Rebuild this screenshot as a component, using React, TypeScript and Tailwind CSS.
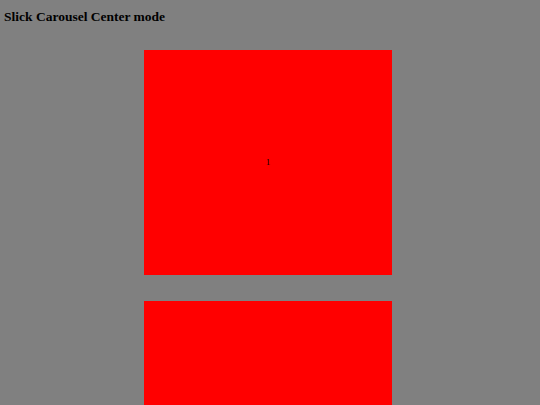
import React from 'react';

const slides = [1, 2];

function App() {
  return (
    <div className="min-h-[405px] bg-[#808080] overflow-hidden" style={{ fontFamily: '"Liberation Serif", serif' }}>
      <h3 className="pl-1 pt-[9px] text-[13.5px] font-bold leading-[15px] text-black">Slick Carousel Center mode</h3>
      <div className="flex flex-col items-center gap-[26px] pt-[26px] pr-[4px]">
        {slides.map((n) => (
          <div key={n} className="flex h-[225px] w-[248px] items-center justify-center bg-[#ff0000]">
            <span className="text-[9px] leading-none text-black">{n}</span>
          </div>
        ))}
      </div>
    </div>
  );
}

export default App;
